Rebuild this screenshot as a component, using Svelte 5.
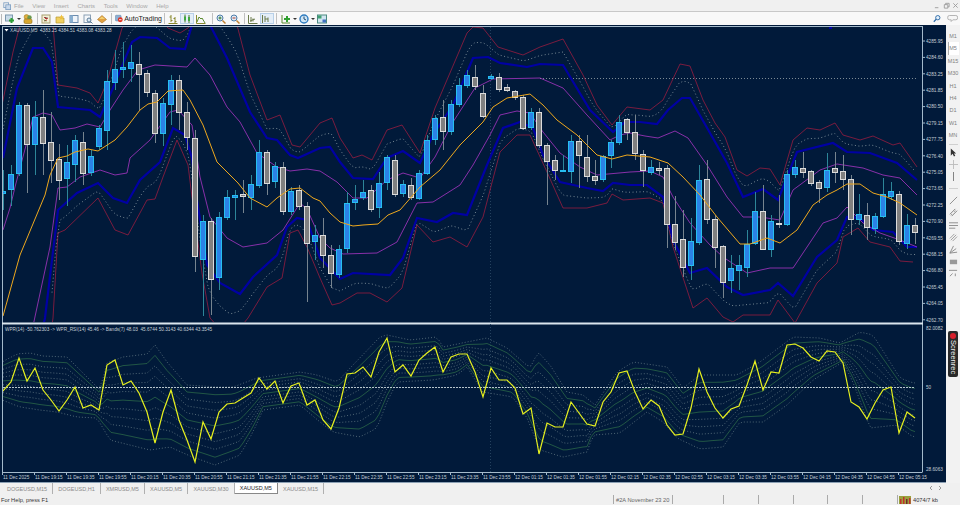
<script lang="ts">
	// candles: x = 3 + 8 * index, [bull, top, bottom, wickTop, wickBottom]
	const CANDLES = [
		[1,191,193,170,210],[1,174,189,165,206],[1,105,173,102,176],[0,105,144,103,193],[1,117,144,101,175],
		[0,117,143,90,175],[0,142,160,112,183],[0,159,180,144,200],[1,162,178,145,206],[1,140,164,135,182],
		[0,142,173,132,185],[1,156,172,150,176],[1,128,146,125,150],[1,81,130,70,150],[1,69,82,50,90],
		[1,67,69,42,78],[1,62,68,45,82],[0,64,74,52,110],[0,73,92,70,97],[0,93,133,90,143],
		[1,103,133,98,146],[1,80,104,75,125],[0,80,112,75,130],[0,112,137,102,150],[0,138,256,130,272],
		[1,221,259,215,316],[0,221,279,218,315],[1,217,277,212,290],[1,197,217,190,220],[1,195,197,190,220],
		[0,194,196,180,213],[1,184,197,175,210],[1,152,185,140,188],[0,152,183,150,195],[1,166,181,162,188],
		[0,167,211,162,215],[1,191,211,187,215],[0,190,206,185,210],[0,206,243,202,302],[1,235,241,225,260],
		[0,235,255,218,268],[0,255,273,245,288],[1,249,274,245,278],[1,203,248,192,253],[1,199,202,185,210],
		[1,192,197,180,200],[0,190,209,185,212],[1,183,207,172,218],[1,157,182,155,190],[0,160,194,155,197],
		[1,184,193,180,197],[0,185,197,178,200],[1,173,198,170,200],[1,140,173,135,175],[1,118,139,115,145],
		[0,117,131,100,150],[1,104,131,100,135],[1,85,104,78,107],[1,75,85,70,88],[0,77,86,65,90],
		[0,93,116,85,118],[1,76,78,74,80],[0,77,89,73,92],[0,87,90,84,92],[0,91,97,90,100],
		[0,97,128,95,130],[1,112,127,108,130],[0,112,145,108,148],[0,145,161,143,205],[0,160,170,155,180],
		[1,170,171,155,172],[1,141,171,135,183],[0,141,155,135,188],[0,157,176,135,182],[0,176,180,160,185],
		[1,156,179,155,182],[1,142,155,140,168],[1,122,142,115,145],[0,119,132,118,140],[0,132,153,115,160],
		[0,154,170,150,187],[1,167,172,160,175],[0,168,170,162,175],[0,168,224,165,248],[0,224,242,196,250],
		[0,239,267,210,277],[1,241,265,218,280],[1,180,242,165,245],[0,179,219,160,224],[0,219,247,215,268],
		[0,246,282,245,298],[1,268,280,255,293],[1,265,270,255,290],[1,244,267,230,277],[1,211,243,192,245],
		[0,211,249,185,250],[1,221,249,215,257],[0,223,224,195,228],[1,174,224,170,226],[1,167,174,160,178],
		[0,168,172,152,178],[0,171,183,170,186],[0,182,188,180,203],[1,170,187,153,192],[0,168,172,152,183],
		[0,171,179,155,190],[0,179,219,175,235],[1,214,219,194,225],[0,215,227,203,240],[1,216,228,213,234],
		[1,194,216,178,218],[1,191,196,182,200],[0,194,241,191,245],[1,225,243,214,249],[0,225,232,218,244]
	];

	const MA = [[3,316],[20,255],[45,195],[50,175],[58,158],[67,156],[75,152],[88,149],[98,151],[115,140],[127,127],[140,110],[148,104],[157,102],[168,91],[183,90],[190,100],[203,125],[217,162],[227,172],[238,183],[250,198],[267,207],[277,198],[290,189],[300,188],[313,198],[320,201],[330,213],[340,222],[353,226],[363,225],[378,224],[388,215],[400,210],[420,187],[440,170],[460,145],[483,122],[493,107],[507,98],[530,94],[543,105],[557,120],[577,135],[597,155],[612,159],[627,155],[650,157],[668,163],[683,177],[700,195],[717,217],[740,244],[750,244],[767,238],[780,243],[797,230],[813,205],[827,195],[837,190],[847,184],[860,184],[873,193],[887,197],[900,203],[917,215]];
	const PURPLE_HI = [[3,230],[10,208],[15,187],[20,168],[28,138],[33,117],[43,113],[52,115],[60,130],[75,128],[87,124],[100,127],[110,110],[123,90],[138,70],[155,65],[187,67],[195,58],[210,75],[227,107],[240,122],[257,153],[277,167],[290,171],[307,169],[320,171],[337,182],[353,198],[367,198],[387,180],[403,173],[420,178],[435,157],[453,122],[475,88],[493,79],[540,78],[563,88],[587,115],[610,140],[620,135],[630,133],[645,136],[658,138],[675,131],[688,138],[707,165],[727,197],[743,217],[760,217],[780,220],[793,190],[820,170],[837,164],[863,168],[883,175],[900,178],[917,195]];
	const PURPLE_LO = [[33,326],[50,247],[58,188],[67,187],[80,177],[100,170],[115,175],[127,173],[130,158],[150,140],[170,112],[178,110],[192,125],[200,177],[210,217],[227,238],[243,247],[267,243],[283,230],[300,203],[307,209],[320,238],[330,248],[343,254],[377,253],[397,242],[417,203],[433,202],[460,185],[473,165],[490,135],[500,115],[517,111],[530,113],[543,132],[560,153],[580,167],[597,175],[630,172],[650,171],[663,177],[673,197],[690,223],[710,245],[723,257],[747,273],[770,268],[793,268],[807,247],[823,223],[837,218],[847,207],[863,223],[880,233],[900,240],[917,247]];
	const BLUE_HI = [[3,158],[17,88],[33,48],[43,48],[52,62],[58,107],[90,110],[100,117],[113,88],[132,42],[140,37],[157,38],[170,48],[185,49],[192,25],[201,8],[210,25],[227,58],[250,112],[267,138],[277,140],[290,155],[298,158],[320,148],[330,147],[340,162],[353,178],[373,179],[387,158],[403,151],[420,163],[433,135],[453,105],[473,58],[488,57],[500,63],[527,67],[540,64],[563,65],[590,110],[613,132],[625,122],[640,122],[657,124],[668,110],[682,98],[690,98],[710,133],[727,163],[743,197],[763,189],[778,200],[797,152],[833,143],[847,152],[870,153],[897,163],[917,180]];
	const BLUE_LO = [[40,340],[45,318],[58,210],[77,193],[98,183],[113,198],[127,203],[140,180],[160,162],[173,128],[185,135],[192,158],[197,200],[207,265],[220,283],[240,294],[253,277],[277,255],[287,227],[297,218],[307,220],[320,258],[340,279],[353,273],[390,275],[403,258],[417,218],[437,222],[453,213],[467,215],[487,165],[503,128],[520,122],[533,128],[543,155],[560,182],[587,188],[603,191],[613,183],[630,185],[647,185],[663,197],[673,240],[690,273],[707,268],[727,287],[743,295],[770,290],[778,283],[793,296],[817,257],[837,240],[847,217],[860,218],[873,230],[893,232],[907,247],[917,247]];
	const RED_HI = [[2,105],[13,52],[20,25],[36,8],[53,25],[58,85],[77,88],[90,93],[98,103],[107,82],[122,28],[145,5],[168,28],[180,33],[188,28],[212,0],[237,25],[250,75],[267,120],[280,115],[292,145],[300,147],[320,123],[332,118],[340,138],[353,158],[362,155],[372,160],[387,130],[402,125],[420,153],[435,108],[467,33],[473,27],[483,28],[498,47],[523,55],[540,47],[563,39],[583,75],[597,105],[612,125],[627,107],[650,110],[663,100],[680,64],[690,66],[703,100],[715,123],[725,137],[737,170],[747,176],[760,168],[770,169],[780,185],[793,140],[807,128],[820,130],[835,123],[843,135],[860,140],[873,136],[893,145],[900,143],[917,167]];
	const RED_LO = [[50,340],[53,318],[58,233],[65,230],[98,198],[115,230],[128,235],[147,200],[155,199],[163,177],[177,140],[188,165],[192,197],[202,273],[210,318],[230,340],[248,318],[267,287],[282,278],[290,233],[298,230],[307,247],[320,278],[332,305],[340,303],[357,293],[370,293],[387,302],[402,288],[417,225],[433,242],[450,237],[467,247],[483,217],[500,152],[517,135],[530,135],[547,172],[563,208],[587,208],[607,203],[612,194],[623,200],[650,198],[663,203],[673,247],[693,308],[707,298],[723,317],[733,322],[743,315],[770,315],[778,300],[795,323],[817,283],[837,263],[843,237],[858,228],[870,242],[890,247],[900,261],[913,262]];

	const WPR = [[2,392],[11,382],[19,358],[27,381],[35,368],[43,390],[51,400],[59,411],[67,400],[75,387],[83,408],[91,405],[99,410],[107,365],[115,360],[123,385],[131,381],[139,393],[147,412],[155,443],[163,412],[171,390],[179,420],[187,440],[195,462],[203,422],[211,439],[219,412],[227,404],[235,403],[243,398],[251,393],[259,378],[267,389],[275,381],[283,403],[291,386],[299,383],[307,405],[315,400],[323,420],[331,429],[339,408],[347,374],[355,373],[363,367],[371,377],[379,352],[387,338],[395,372],[403,365],[411,376],[419,360],[427,353],[435,347],[443,372],[451,357],[459,354],[467,354],[475,372],[483,397],[491,368],[499,380],[507,380],[515,388],[523,414],[531,408],[539,454],[547,423],[555,427],[563,427],[571,402],[579,413],[587,424],[595,426],[603,402],[611,392],[619,373],[627,371],[635,392],[643,409],[651,400],[659,406],[667,425],[675,435],[683,434],[691,408],[699,369],[707,392],[715,408],[723,418],[731,409],[739,406],[747,385],[755,361],[763,390],[771,372],[779,373],[787,345],[795,344],[803,348],[811,357],[819,361],[827,351],[835,352],[843,363],[851,402],[859,407],[867,419],[875,403],[883,390],[891,387],[899,433],[907,412],[915,418]];
	const FAN_TOP = [[2,362],[17,354],[30,353],[43,356],[67,357],[80,370],[100,390],[107,363],[123,357],[147,354],[155,345],[167,362],[187,385],[217,387],[233,387],[257,378],[300,372],[317,375],[337,382],[353,365],[380,337],[387,335],[410,340],[437,337],[443,347],[467,342],[487,338],[507,348],[530,368],[538,352],[550,365],[567,392],[583,395],[595,405],[617,372],[633,362],[667,367],[683,388],[700,375],[737,375],[760,362],[793,337],[820,338],[840,343],[860,332],[873,335],[900,378],[913,383]];
	const FAN_BOT = [[2,400],[20,407],[40,410],[57,412],[77,417],[97,418],[110,440],[150,450],[170,447],[190,456],[215,465],[240,455],[253,432],[263,410],[300,405],[320,422],[333,432],[360,437],[377,428],[387,402],[397,382],[433,380],[457,375],[467,367],[483,392],[513,397],[527,418],[540,450],[563,457],[587,452],[593,435],[620,433],[647,412],[663,422],[677,438],[700,449],[723,447],[740,422],[763,422],[787,405],[813,380],[843,362],[853,382],[870,428],[897,425],[913,437]];

	const PRICES = ['4285.95','4284.60','4283.25','4281.85','4280.50','4279.15','4277.75','4276.40','4275.05','4273.65','4272.25','4270.90','4269.55','4268.15','4266.80','4265.45','4264.05','4262.70'];
	const TIMES = ['11 Dec 2025','11 Dec 19:15','11 Dec 19:35','11 Dec 19:55','11 Dec 20:15','11 Dec 20:35','11 Dec 20:55','11 Dec 21:15','11 Dec 21:35','11 Dec 21:55','11 Dec 22:15','11 Dec 22:35','11 Dec 22:55','11 Dec 23:15','11 Dec 23:35','11 Dec 23:55','12 Dec 01:15','12 Dec 01:35','12 Dec 01:55','12 Dec 02:15','12 Dec 02:35','12 Dec 02:55','12 Dec 03:15','12 Dec 03:35','12 Dec 03:55','12 Dec 04:15','12 Dec 04:35','12 Dec 04:55','12 Dec 05:15'];
	const MENU = ['File','View','Insert','Charts','Tools','Window','Help'];
	const TABS = ['DOGEUSD,M15','DOGEUSD,H1','XMRUSD,M5','XAUUSD,M5','XAUUSD,M30','XAUUSD,M5','XAUUSD,M15'];
	const PERIODS = ['M1','M5','M15','M30','H1','H4','D1','W1','MN'];
	const STATUS_CELLS = [1, 2, 3, 4, 5, 6];

	const line = (pts: number[][]) => pts.map((p) => p.join(',')).join(' ');

	function at(pts: number[][], x: number) {
		if (x <= pts[0][0]) return pts[0][1];
		for (let i = 1; i < pts.length; i++) {
			if (x <= pts[i][0]) {
				const [x0, y0] = pts[i - 1];
				const [x1, y1] = pts[i];
				return y0 + ((y1 - y0) * (x - x0)) / (x1 - x0);
			}
		}
		return pts[pts.length - 1][1];
	}

	// a line a share t of the way from one curve to another
	function mix(a: number[][], b: number[][], t: number, from: number, to: number) {
		const out: number[][] = [];
		for (let x = from; x <= to; x += 4) {
			out.push([x, +(at(a, x) + (at(b, x) - at(a, x)) * t).toFixed(1)]);
		}
		return line(out);
	}

	const dotsHi = mix(BLUE_HI, RED_HI, 0.5, 3, 917);
	const dotsLo = mix(BLUE_LO, RED_LO, 0.5, 52, 917);

	const fan = Array.from({ length: 11 }, (_, i) => ({
		points: mix(FAN_TOP, FAN_BOT, i / 10, 3, 915),
		green: i === 1 || i === 5 || i === 9
	}));
</script>

<div class="terminal">
	<div class="menubar">
		<svg class="appicon" viewBox="0 0 10 10"><rect x="1" y="1" width="6" height="6" fill="none" stroke="#7a9cc0" /><rect x="3.5" y="3.5" width="6" height="6" fill="#c8d8ea" stroke="#7a9cc0" /></svg>
		{#each MENU as item}
			<span class="menuitem">{item}</span>
		{/each}
		<div class="winbtns">
			<svg viewBox="0 0 8 8"><path d="M1 6.5h4" stroke="#999" /></svg>
			<svg viewBox="0 0 8 8"><path d="M1.5 3h4v4h-4zM3 3V1.5h4v4H5.5" fill="none" stroke="#999" /></svg>
			<svg viewBox="0 0 8 8"><path d="M1.5 1.5l5 5M6.5 1.5l-5 5" stroke="#999" /></svg>
		</div>
	</div>

	<div class="toolbar">
		<span class="grip"></span>
		<span class="tool"><svg viewBox="0 0 10 10"><rect x="0.5" y="1" width="7" height="6" fill="#c9dbe8" stroke="#7c97ad" /><path d="M6.5 4v5M4 6.5h5" stroke="#2f9e35" stroke-width="2" /></svg></span>
		<span class="caret"></span>
		<span class="tool"><svg viewBox="0 0 10 10"><circle cx="3.5" cy="3" r="2.4" fill="#e0b040" stroke="#a07c20" stroke-width=".6" /><circle cx="6.5" cy="3.5" r="2.2" fill="#6a9a50" /><rect x="1" y="5" width="8" height="4.5" rx="1.5" fill="#d8a830" stroke="#8c6c18" stroke-width=".6" /></svg></span>
		<span class="sep"></span>
		<span class="tool"><svg viewBox="0 0 10 10"><rect x="1" y="1" width="8" height="8" fill="#f4f0d8" stroke="#a8a070" /><path d="M3 3l2 2 2-1M3 7l3-1" stroke="#c03030" /><path d="M3 5.5l2 2" stroke="#30a040" /></svg></span>
		<span class="tool"><svg viewBox="0 0 10 10"><path d="M1 3h3l1 1h4v5H1z" fill="#f0d060" stroke="#b89830" stroke-width=".7" /><path d="M6.5 .5l.8 1.7 1.7.3-1.2 1.2.3 1.8-1.6-.9-1.6.9.3-1.8L4 2.5l1.7-.3z" fill="#eec040" /></svg></span>
		<span class="tool"><svg viewBox="0 0 10 10"><rect x="1" y="1.5" width="8" height="7" fill="#eef4fa" stroke="#6c8cae" /><rect x="1" y="1.5" width="3" height="7" fill="#88aed0" /></svg></span>
		<span class="tool"><svg viewBox="0 0 10 10"><rect x="1" y="1" width="6.5" height="7.5" fill="#f4f7fa" stroke="#8a9fb4" /><circle cx="6" cy="6" r="2" fill="#d8e8f4" stroke="#5a7a98" /><path d="M7.5 7.5l2 2" stroke="#5a7a98" /></svg></span>
		<span class="tool"><svg viewBox="0 0 10 10"><path d="M5 1.5l4.5 4L5 9 .5 5.5z" fill="#e0a040" stroke="#a87020" stroke-width=".6" /><path d="M2 5l3-2.5L8 5z" fill="#f4d070" /></svg></span>
		<span class="sep"></span>
		<span class="autotrading">
			<svg viewBox="0 0 10 10"><rect x="0.5" y="1" width="7" height="7" rx="1" fill="#8cb0d4" stroke="#5a7ca0" stroke-width=".6" /><circle cx="6.5" cy="6.5" r="3" fill="#e03020" /><rect x="5" y="6" width="3" height="1" fill="#fff" /></svg>
			AutoTrading
		</span>
		<span class="sep"></span>
		<span class="tool"><svg viewBox="0 0 10 10"><path d="M3 1v7M1.500 3H3M3 6.500h1.500M7 3v6M5.500 4.500H7M7 7.500h1.500M.5 9.500h9" stroke="#8a8a30" fill="none" /></svg></span>
		<span class="tool selected"><svg viewBox="0 0 10 10"><path d="M3 .5v8M7 1v8M.5 9.500h9" stroke="#4a7a30" fill="none" /><rect x="2" y="2.500" width="2" height="4" fill="#40a840" /><rect x="6" y="3" width="2" height="4" fill="#40a840" /></svg></span>
		<span class="tool"><svg viewBox="0 0 10 10"><path d="M.5 1v8.500h9" stroke="#8a8a30" fill="none" /><path d="M1 8l2-5 2 2 1-1 3 5" stroke="#5a8a30" fill="none" /></svg></span>
		<span class="sep wide"></span>
		<span class="tool"><svg viewBox="0 0 10 10"><circle cx="4" cy="4" r="3" fill="#dfeaf4" stroke="#4d7ca8" /><path d="M6.500 6.500l3 3" stroke="#c08030" stroke-width="1.500" /><path d="M2.500 4h3M4 2.500v3" stroke="#2f7a30" /></svg></span>
		<span class="tool"><svg viewBox="0 0 10 10"><circle cx="4" cy="4" r="3" fill="#dfeaf4" stroke="#4d7ca8" /><path d="M6.500 6.500l3 3" stroke="#c08030" stroke-width="1.500" /><path d="M2.500 4h3" stroke="#b04030" /></svg></span>
		<span class="sep"></span>
		<span class="tool"><svg viewBox="0 0 10 10"><path d="M.5 1v8.500h9" stroke="#6a7a4a" fill="none" /><path d="M3 3v5M5 4.500v3M2 7l5-2" stroke="#6a7a4a" fill="none" /></svg></span>
		<span class="tool selected"><svg viewBox="0 0 10 10"><path d="M.5 1v8.500h9" stroke="#6a7a4a" fill="none" /><path d="M3 2v6M6 3.500v4.500M3 5h3" stroke="#6a7a4a" fill="none" /></svg></span>
		<span class="sep"></span>
		<span class="tool push"><svg viewBox="0 0 10 10"><path d="M1 1v8h8" stroke="#5a8a30" fill="none" /><path d="M6 2v6M3 5h6" stroke="#30a030" stroke-width="2" /></svg></span>
		<span class="caret"></span>
		<span class="tool"><svg viewBox="0 0 10 10"><circle cx="5" cy="5" r="4" fill="#cfe6f6" stroke="#2f7cc0" stroke-width="1.400" /><path d="M5 2.500V5l2 1" stroke="#204a70" fill="none" /></svg></span>
		<span class="caret"></span>
		<span class="tool"><svg viewBox="0 0 10 10"><rect x=".5" y="1" width="9" height="8" fill="#d0e4f0" stroke="#4a8a80" /><rect x="1" y="1.500" width="3.500" height="3" fill="#40a070" /><rect x="5.500" y="5.500" width="3.500" height="3" fill="#4070c0" /></svg></span>
		<div class="toolbar-end">
			<svg viewBox="0 0 10 10"><circle cx="6" cy="4" r="2.700" fill="#e4f0fa" stroke="#2f6ca8" stroke-width="1.200" /><path d="M4 6L1 9" stroke="#2f6ca8" stroke-width="1.600" /></svg>
			<svg class="chat" viewBox="0 0 14 10"><path d="M4 1.500h7.500a2 2 0 0 1 2 2v1a2 2 0 0 1-2 2H8l-2 2v-2H4a2 2 0 0 1-2-2v-1a2 2 0 0 1 2-2z" fill="#f6f6f6" stroke="#a8a8a8" /></svg>
		</div>
	</div>

	<div class="workspace">
		<svg class="chart" viewBox="0 25 946 458">
			<defs>
				<clipPath id="upper"><rect x="3" y="27" width="920" height="295" /></clipPath>
				<clipPath id="lower"><rect x="3" y="325" width="920" height="147" /></clipPath>
			</defs>
			<rect x="0" y="25" width="946" height="458" fill="#011a3a" />

			<line class="frame" x1="2.500" y1="26.500" x2="922.500" y2="26.500" />
			<line class="frame" x1="2.500" y1="26" x2="2.500" y2="472" />
			<line class="frame" x1="922.500" y1="26" x2="922.500" y2="472" />
			<line class="frame" x1="2.500" y1="472.500" x2="922.500" y2="472.500" />
			<rect x="2" y="322.500" width="921" height="2" fill="#dbe6ee" />

			<line class="separator" x1="490.500" y1="27" x2="490.500" y2="472" />
			<line class="bidline" x1="540" y1="78.500" x2="916" y2="78.500" />

			<g clip-path="url(#upper)" fill="none">
				<polyline class="red" points={line(RED_HI)} />
				<polyline class="red" points={line(RED_LO)} />
				<polyline class="dots" points={dotsHi} />
				<polyline class="dots" points={dotsLo} />
				<polyline class="blue" points={line(BLUE_HI)} />
				<polyline class="blue" points={line(BLUE_LO)} />
				<polyline class="purple" points={line(PURPLE_HI)} />
				<polyline class="purple" points={line(PURPLE_LO)} />
			</g>

			<g clip-path="url(#upper)">
				{#each CANDLES as [bull, top, bottom, wickTop, wickBottom], i}
					{@const x = 3 + 8 * i}
					<line class={bull ? 'wick-up' : 'wick-down'} x1={x + 0.5} y1={wickTop} x2={x + 0.5} y2={wickBottom} />
					<rect class={bull ? 'candle-up' : 'candle-down'} x={x - 2.5} y={top + 0.5} width="5" height={Math.max(bottom - top, 1)} />
				{/each}
				<polyline class="ma" points={line(MA)} />
				<rect x="829" y="27" width="3" height="2" fill="#0000a8" />
			</g>

			<text class="label" x="10" y="32">XAUUSD,M5  4383.25 4384.51 4383.08 4383.28</text>
			<path d="M4.500 29h4l-2 2.500z" fill="#fff" />

			{#each PRICES as price, i}
				<line class="tick" x1="923" y1={41 + i * 16.4} x2="925" y2={41 + i * 16.4} />
				<text class="label" x="926" y={42.8 + i * 16.4}>{price}</text>
			{/each}

			<g clip-path="url(#lower)" fill="none">
				{#each fan as band}
					<polyline class={band.green ? 'fan-green' : 'fan-dots'} points={band.points} />
				{/each}
				<line class="level" x1="3" y1="387.500" x2="915" y2="387.500" />
				<polyline class="wpr" points={line(WPR)} />
			</g>

			<text class="label" x="5" y="331">WPR(14) -50.762303 -> WPR_RSI(14) 45.46 -> Bands(7) 48.03  45.6744 50.3143 40.6344 43.3545</text>
			<text class="label" x="926" y="330">82.0082</text>
			<text class="label" x="926" y="389">50</text>
			<text class="label" x="926" y="470.500">28.6063</text>

			{#each TIMES as time, i}
				<line class="tick" x1={2.5 + i * 32} y1="472" x2={2.5 + i * 32} y2="475" />
				<text class="label" x={3 + i * 32} y="479">{time}</text>
			{/each}
			<rect x="0" y="482" width="946" height="1" fill="#8ba0b4" />
		</svg>

		<aside class="sidebar">
			<div class="periods">
				{#each PERIODS as period}
					<span class="period" class:current={period === 'M5'}>{period}</span>
				{/each}
			</div>
			<div class="drawtools">
				<svg viewBox="0 0 10 10"><path d="M2 .5v8l2-2 1.500 3 1.500-.8L5.500 6H8z" fill="#333" /></svg>
				<svg viewBox="0 0 10 10"><path d="M5 0v10M0 5h10" stroke="#bbb" /></svg>
				<svg viewBox="0 0 10 10"><path d="M5 0v10" stroke="#777" /></svg>
				<svg viewBox="0 0 10 10"><path d="M0 5h10" stroke="#ccc" /></svg>
				<svg viewBox="0 0 10 10"><path d="M1 9l8-8" stroke="#888" /></svg>
				<svg viewBox="0 0 10 10"><path d="M1 7l6-6M3 9l6-6M2 8l1-1M6 4l1-1" stroke="#777" fill="none" /></svg>
				<svg viewBox="0 0 10 10"><path d="M0 2h10M0 5h10M0 8h7" stroke="#888" /></svg>
				<svg viewBox="0 0 10 10"><path d="M1 6l5-5M2 8l6-6M4 9l5-5" stroke="#999" /></svg>
				<svg viewBox="0 0 10 10"><path d="M1 9l4-8M1 9l7-5M1 9l8-1" stroke="#888" fill="none" /></svg>
				<svg viewBox="0 0 10 10"><rect x="1" y="3" width="8" height="5" fill="#999" /></svg>
				<svg viewBox="0 0 10 10"><path d="M0 1.500h9M1 8l3-3M7 5v3" stroke="#888" fill="none" /></svg>
			</div>
			<div class="badge">
				<span class="rec"></span>
				<span class="badge-text">Screenrec</span>
			</div>
		</aside>
	</div>

	<div class="tabbar">
		{#each TABS as tab, i}
			<span class="tab" class:active={i === 5}>{tab}</span>
		{/each}
		<div class="tabarrows">
			<svg viewBox="0 0 6 6"><path d="M4 1L2 3l2 2" fill="none" stroke="#999" /></svg>
			<svg viewBox="0 0 6 6"><path d="M2 1l2 2-2 2" fill="none" stroke="#999" /></svg>
		</div>
	</div>

	<div class="statusbar">
		<span class="help">For Help, press F1</span>
		<span class="cell profile">#2A November 23 20</span>
		{#each STATUS_CELLS as cell (cell)}
			<span class="cell empty" class:first={cell === 1}></span>
		{/each}
		<span class="cell traffic">
			<svg viewBox="0 0 12 8">
				<rect width="12" height="8" fill="#9aa03c" />
				<rect x="1" y="3" width="1.500" height="5" fill="#c03030" />
				<rect x="4" y="1" width="1.500" height="7" fill="#c03030" />
				<rect x="7" y="3" width="1.500" height="5" fill="#70282c" />
				<rect x="10" y="2" width="1.500" height="6" fill="#c03030" />
			</svg>
			4074/7 kb
		</span>
	</div>
</div>

<style>
	:global(body) {
		margin: 0;
		background: #f0f0f0;
	}

	.terminal {
		width: 960px;
		height: 505px;
		display: flex;
		flex-direction: column;
		overflow: hidden;
		font-family: 'Liberation Sans', Arial, sans-serif;
		background: #f0f0f0;
	}

	/* ---- Menu ---- */

	.menubar {
		height: 11px;
		display: flex;
		align-items: center;
		padding-left: 3px;
		font-size: 6px;
		color: #a8a8a8;
		border-bottom: 1px solid #c8c8c8;
	}

	.appicon {
		width: 8px;
		height: 8px;
		margin-right: 3px;
	}

	.menuitem {
		margin-right: 8.600px;
	}

	.winbtns {
		margin-left: auto;
		display: flex;
		gap: 2px;
		padding-right: 1px;
	}

	.winbtns svg {
		width: 7px;
		height: 7px;
	}

	/* ---- Toolbar ---- */

	.toolbar {
		height: 13px;
		display: flex;
		align-items: center;
		padding-left: 1px;
		background: #f8f8f8;
	}

	.grip {
		width: 1px;
		height: 10px;
		margin-right: 1px;
		background: #b8b8b8;
	}

	.tool {
		width: 14px;
		height: 11px;
		flex: none;
		display: flex;
		align-items: center;
		justify-content: center;
	}

	.tool svg {
		width: 10px;
		height: 10px;
	}

	.tool.selected {
		background: #e4eef8;
		outline: 1px solid #b8d0e8;
		outline-offset: -1px;
	}

	.tool.push {
		margin-left: 1px;
	}

	.caret {
		width: 0;
		height: 0;
		flex: none;
		border: 2px solid transparent;
		border-top-color: #333;
		border-bottom: 0;
	}

	.sep {
		width: 1px;
		height: 11px;
		flex: none;
		margin: 0 1px 0 2px;
		background: #c0c0c0;
	}

	.sep.wide {
		margin-left: 4px;
	}

	.autotrading {
		width: 49px;
		flex: none;
		display: flex;
		align-items: center;
		gap: 1px;
		padding-left: 2px;
		box-sizing: border-box;
		font-size: 7px;
		color: #222;
	}

	.autotrading svg {
		width: 9px;
		height: 9px;
	}

	.toolbar-end {
		margin-left: auto;
		display: flex;
		align-items: center;
		gap: 5px;
		padding-right: 2px;
	}

	.toolbar-end svg {
		width: 8px;
		height: 9px;
	}

	.toolbar-end .chat {
		width: 12px;
	}

	/* ---- Chart ---- */

	.workspace {
		height: 458px;
		display: flex;
	}

	.chart {
		width: 946px;
		height: 458px;
		display: block;
		flex: none;
	}

	.frame {
		stroke: #a4bacb;
		stroke-width: 1;
	}

	.separator {
		stroke: #25425f;
		stroke-dasharray: 1 2;
	}

	.bidline {
		stroke: #7c8a94;
		stroke-dasharray: 1 2;
	}

	.red {
		stroke: #ae1c40;
		stroke-width: 0.7;
	}

	.blue {
		stroke: #0000a4;
		stroke-width: 2.2;
	}

	.purple {
		stroke: #c23ad8;
		stroke-width: 0.7;
	}

	.dots {
		stroke: #a6b4b8;
		stroke-width: 0.7;
		stroke-dasharray: 1 2.500;
	}

	.ma {
		fill: none;
		stroke: #eea81e;
		stroke-width: 1;
	}

	.wick-up {
		stroke: #2d8699;
	}

	.wick-down {
		stroke: #76848f;
	}

	.candle-up {
		fill: #2b82e6;
		stroke: #26bff0;
	}

	.candle-down {
		fill: #808080;
		stroke: #dcdcdc;
	}

	.label {
		font-size: 4.700px;
		fill: #c4ced6;
		white-space: pre;
	}

	.tick {
		stroke: #a4bacb;
	}

	.fan-dots {
		stroke: #83989c;
		stroke-width: 0.6;
		stroke-dasharray: 1 2;
	}

	.fan-green {
		stroke: #2a6648;
		stroke-width: 0.8;
	}

	.level {
		stroke: #b6c4cc;
		stroke-dasharray: 2 1;
	}

	.wpr {
		stroke: #e6f01e;
		stroke-width: 1.200;
	}

	/* ---- Side tools ---- */

	.sidebar {
		flex: 1;
		display: flex;
		flex-direction: column;
		align-items: center;
		padding-top: 5px;
		color: #808080;
		font-size: 5.500px;
		background: #f2f2f2;
	}

	.periods {
		display: flex;
		flex-direction: column;
		align-items: center;
	}

	.period {
		width: 11px;
		height: 12.400px;
		line-height: 12.400px;
		text-align: center;
	}

	.period.current {
		background: #fff;
		box-shadow: inset 1px 0 0 #aaa;
	}

	.drawtools {
		display: flex;
		flex-direction: column;
		gap: 3.200px;
		margin-top: 2px;
		padding-top: 3px;
		border-top: 1px solid #d0d0d0;
	}

	.drawtools svg {
		width: 9px;
		height: 9px;
		display: block;
	}

	.badge {
		width: 10px;
		height: 46px;
		margin-top: 53px;
		padding-top: 2px;
		box-sizing: border-box;
		display: flex;
		flex-direction: column;
		align-items: center;
		gap: 1px;
		border-radius: 2px;
		background: #2a2a2a;
	}

	.rec {
		width: 6px;
		height: 6px;
		flex: none;
		border-radius: 50%;
		background: #d8202c;
	}

	.badge-text {
		writing-mode: vertical-rl;
		font-size: 7.500px;
		line-height: 9px;
		color: #eee;
	}

	/* ---- Tabs ---- */

	.tabbar {
		height: 11px;
		display: flex;
		align-items: stretch;
		padding-left: 2px;
		font-size: 5.500px;
		color: #8a8a8a;
	}

	.tab {
		display: flex;
		align-items: center;
		padding: 0 5.100px;
		border-right: 1px solid #b0b0b0;
	}

	.tab.active {
		color: #222;
		background: #fff;
		border: 1px solid #888;
		border-top: 0;
		border-left: 0;
	}

	.tabarrows {
		margin-left: auto;
		display: flex;
		gap: 3px;
		align-items: flex-start;
		padding: 2px 17px 0 0;
	}

	.tabarrows svg {
		width: 6px;
		height: 6px;
	}

	/* ---- Status ---- */

	.statusbar {
		flex: 1;
		display: flex;
		align-items: center;
		font-size: 5.700px;
		color: #666;
	}

	.help {
		width: 613px;
		padding-left: 1px;
		box-sizing: border-box;
		color: #333;
	}

	.cell {
		height: 9px;
		flex: none;
		display: flex;
		align-items: center;
		border-left: 1px solid #aaa;
		box-sizing: border-box;
	}

	.profile {
		width: 59px;
		padding-left: 2px;
		white-space: nowrap;
	}

	.empty {
		width: 34.800px;
	}

	.empty.first {
		width: 51px;
	}

	.traffic {
		gap: 2px;
		padding-left: 1px;
		color: #333;
	}

	.traffic svg {
		width: 12px;
		height: 8px;
	}
</style>
